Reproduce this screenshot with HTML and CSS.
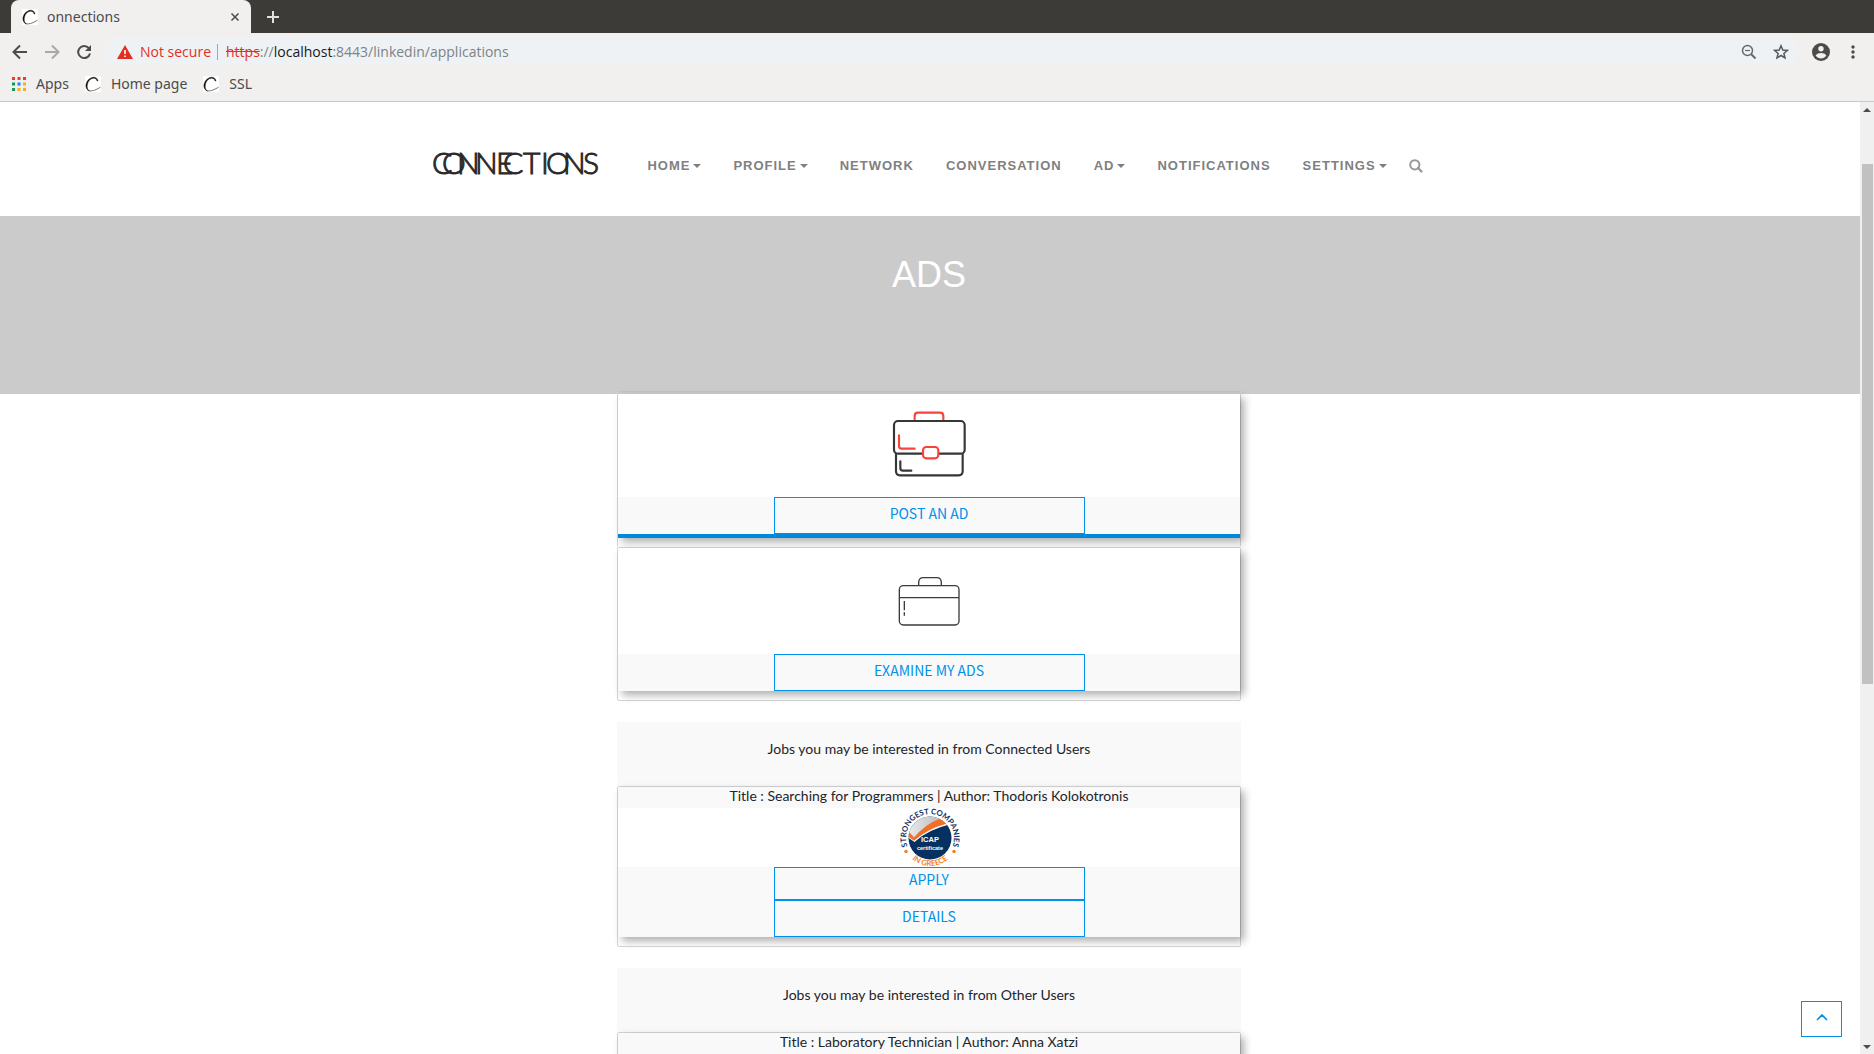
FILE: index.html
```html
<!DOCTYPE html>
<html lang="en">
<head>
<meta charset="utf-8">
<title>Connections</title>
<link rel="stylesheet" href="styles.css">
</head>
<body>
<svg class="defs" aria-hidden="true">
  <symbol id="favicon" viewBox="0 0 16 16">
    <rect width="16" height="16" fill="#fff"/>
    <path d="M3 14.300C5 15.400 8 14.800 10 14C12 13.200 14 12.200 15.500 11.200" fill="none" stroke="#777" stroke-width="1"/>
    <path d="M13 5C12.500 1.600 9.500 .6 6.800 1.600C3 3 .3 7.300 1 11C1.400 13 2.600 14.400 4.500 15C2.200 13.600 1.800 11 2.500 8C3.300 4.800 5.500 2.500 8.500 2.300C10.600 2.300 11.800 3.200 12 5Z" fill="#111" stroke="#111" stroke-width=".4"/>
  </symbol>
</svg>

<header class="browser">
  <div class="tabs">
    <div class="tab">
      <svg class="favicon"><use href="#favicon"/></svg>
      <span class="tab-title">onnections</span>
      <button class="icon-btn" aria-label="Close tab"><svg width="10" height="10" viewBox="0 0 10 10"><path d="M1.500 1.500L8.500 8.500M8.500 1.500L1.500 8.500" stroke="#4a4a4a" stroke-width="1.500"/></svg></button>
    </div>
    <button class="icon-btn new-tab" aria-label="New tab"><svg width="12" height="12" viewBox="0 0 12 12"><path d="M6 0V12M0 6H12" stroke="#e4e0da" stroke-width="2"/></svg></button>
  </div>
  <div class="toolbar">
    <button class="icon-btn" aria-label="Back"><svg width="16" height="16" viewBox="0 0 16 16"><path d="M15 8H2M8 1.500L1.500 8L8 14.500" fill="none" stroke="#4b4b4b" stroke-width="2"/></svg></button>
    <button class="icon-btn" aria-label="Forward"><svg width="16" height="16" viewBox="0 0 16 16"><path d="M1 8H14M8 1.500L14.500 8L8 14.500" fill="none" stroke="#a9a8a6" stroke-width="2"/></svg></button>
    <button class="icon-btn" aria-label="Reload"><svg width="16" height="16" viewBox="0 0 16 16"><path d="M12.800 4.200A6 6 0 1 0 14 9.500" fill="none" stroke="#4b4b4b" stroke-width="2"/><path d="M15 1V7H9Z" fill="#4b4b4b"/></svg></button>
    <div class="omnibox">
      <svg width="16" height="14" viewBox="0 0 16 14"><path d="M8 0L16 14H0Z" fill="#e1301f"/><path d="M8 5V9M8 10.500V12" stroke="#fff" stroke-width="1.600"/></svg>
      <span class="insecure">Not secure</span>
      <span class="url"><s>https</s>://<b>localhost</b>:8443/linkedin/applications</span>
      <button class="icon-btn zoom" aria-label="Zoom"><svg width="16" height="16" viewBox="0 0 16 16"><circle cx="6.500" cy="6.500" r="5" fill="none" stroke="#666a6c" stroke-width="1.500"/><path d="M4 6.500H9" stroke="#666a6c" stroke-width="1.200"/><path d="M10 10L14.500 14.500" stroke="#666a6c" stroke-width="2"/></svg></button>
      <button class="icon-btn" aria-label="Bookmark this page"><svg width="16" height="16" viewBox="0 0 16 16"><path d="M8 1.800L9.800 6L14.400 6.400L10.900 9.400L12 14L8 11.500L4 14L5.100 9.400L1.600 6.400L6.200 6Z" fill="none" stroke="#555a5c" stroke-width="1.500"/></svg></button>
    </div>
    <button class="icon-btn profile" aria-label="Profile"><svg width="18" height="18" viewBox="0 0 18 18"><circle cx="9" cy="9" r="9" fill="#4b4b4b"/><circle cx="9" cy="5.700" r="2.700" fill="#f1f0ee"/><path d="M3.600 12.600C4.500 10.500 7 9.900 9 9.900C11 9.900 13.500 10.500 14.400 12.600C13 14.700 11 15.600 9 15.600C7 15.600 5 14.700 3.600 12.600Z" fill="#f1f0ee"/></svg></button>
    <button class="icon-btn" aria-label="Menu"><svg width="16" height="16" viewBox="0 0 16 16"><g fill="#4b4b4b"><circle cx="8" cy="3" r="1.700"/><circle cx="8" cy="8" r="1.700"/><circle cx="8" cy="13" r="1.700"/></g></svg></button>
  </div>
  <nav class="bookmarks" aria-label="Bookmarks">
    <a href="#"><svg width="14" height="14" viewBox="0 0 14 14"><path d="M0 0h3v3H0zM5.500 0h3v3h-3zM11 0h3v3h-3z" fill="#ee3b2f"/><path d="M0 5.500h3v3H0zM0 11h3v3H0z" fill="#149a56"/><path d="M5.500 5.500h3v3h-3z" fill="#1a82ee"/><path d="M11 5.500h3v3h-3zM5.500 11h3v3h-3zM11 11h3v3h-3z" fill="#f8ae22"/></svg>Apps</a>
    <a href="#"><svg class="favicon"><use href="#favicon"/></svg>Home page</a>
    <a href="#"><svg class="favicon"><use href="#favicon"/></svg>SSL</a>
  </nav>
</header>

<div class="viewport">
  <div class="page">
    <header class="site-header">
      <a class="logo" href="#" aria-label="Connections home">
        <svg width="168" height="40" viewBox="0 0 168 40"><text y="31" x="1 11 26 44 65 72 92 110 115 132 152">CONNECTIONS</text></svg>
      </a>
      <nav class="menu" aria-label="Main">
        <a class="drop" href="#">HOME</a>
        <a class="drop" href="#">PROFILE</a>
        <a href="#">NETWORK</a>
        <a href="#">CONVERSATION</a>
        <a class="drop" href="#">AD</a>
        <a href="#">NOTIFICATIONS</a>
        <a class="drop" href="#">SETTINGS</a>
      </nav>
      <button class="icon-btn search" aria-label="Search"><svg width="14" height="14" viewBox="0 0 14 14"><circle cx="5.800" cy="5.800" r="4.600" fill="none" stroke="#999" stroke-width="2"/><path d="M9 9L12.500 12.500" stroke="#999" stroke-width="2.400" stroke-linecap="round"/></svg></button>
    </header>

    <section class="banner"><h1>ADS</h1></section>

    <main class="ads">
      <section class="card card-first">
        <div class="card-body card-accent">
          <div class="picture picture-post">
            <svg width="76" height="68" viewBox="843 120 228 204" fill="none" stroke="#353737" stroke-width="6.500" stroke-linecap="round">
              <path d="M914 148V138Q914 128 924 128H990Q1000 128 1000 138V148" stroke="#f8423c"/>
              <rect x="852" y="153" width="212" height="98" rx="12"/>
              <path d="M858 252V304Q858 316 870 316H1046Q1058 316 1058 304V252"/>
              <path d="M867 196V228Q867 236 875 236H914" stroke="#f8423c"/>
              <path d="M871 274V294Q871 302 879 302H904"/>
              <rect x="939" y="231" width="46" height="34" rx="10" fill="#fff" stroke="#f8423c"/>
            </svg>
          </div>
          <div class="actions"><a class="action" href="#">POST AN AD</a></div>
        </div>
      </section>

      <section class="card">
        <div class="card-body">
          <div class="picture picture-examine">
            <svg width="64" height="52" viewBox="111 584 192 156" fill="none" stroke="#3a3b3b" stroke-width="4">
              <path d="M176 615V607Q176 592 190 592H230Q244 592 244 607V615"/>
              <rect x="118" y="616" width="179" height="118" rx="12"/>
              <path d="M118 652H297M133 662V690M133 696V706"/>
            </svg>
          </div>
          <div class="actions"><a class="action" href="#">EXAMINE MY ADS</a></div>
        </div>
      </section>

      <h2 class="group-title">Jobs you may be interested in from Connected Users</h2>
      <section class="card">
        <div class="card-body">
          <h3 class="ad-title">Title : Searching for Programmers | Author: Thodoris Kolokotronis</h3>
          <div class="picture">
            <svg class="badge" width="62" height="59" viewBox="0 0 248 236">
              <defs>
                <path id="arc-top" d="M41 161A96 96 0 1 1 215 161"/>
                <path id="arc-bottom" d="M28 170A112 112 0 0 0 228 170"/>
                <clipPath id="disc"><circle cx="128" cy="120" r="86"/></clipPath>
                <linearGradient id="silver"><stop offset="0" stop-color="#eee"/><stop offset="1" stop-color="#a9abb0"/></linearGradient>
              </defs>
              <g clip-path="url(#disc)">
                <rect width="248" height="236" fill="#06305f"/>
                <path d="M30 20H220V50Q120 70 70 118L30 90Z" fill="url(#silver)"/>
                <path d="M44 98L66 116Q110 70 180 56L150 30H230V60Q120 84 66 136L40 118Z" fill="#fff"/>
                <path d="M44 100L64 122Q110 66 170 44L190 62Q120 80 64 128L44 114Z" fill="#f26f26" stroke="#f26f26" stroke-width="5"/>
              </g>
              <text class="badge-top"><textPath href="#arc-top" startOffset="50%">STRONGEST COMPANIES</textPath></text>
              <text class="badge-bottom"><textPath href="#arc-bottom" startOffset="50%">IN GREECE</textPath></text>
              <circle cx="32" cy="174" r="7" fill="#f58220"/><circle cx="224" cy="174" r="7" fill="#f58220"/>
              <text class="badge-name" x="128" y="137">ICAP</text>
              <text class="badge-note" x="128" y="166">certificate</text>
            </svg>
          </div>
          <div class="actions">
            <a class="action action-short" href="#">APPLY</a>
            <a class="action" href="#">DETAILS</a>
          </div>
        </div>
      </section>

      <h2 class="group-title">Jobs you may be interested in from Other Users</h2>
      <section class="card">
        <div class="card-body">
          <h3 class="ad-title">Title : Laboratory Technician | Author: Anna Xatzi</h3>
          <div class="picture"></div>
        </div>
      </section>
    </main>

    <a class="to-top" href="#" aria-label="Back to top"><svg width="12" height="7" viewBox="0 0 12 7"><path d="M1 6L6 1L11 6" fill="none" stroke="#0090e8" stroke-width="1.700"/></svg></a>
  </div>
  <div class="scrollbar" aria-hidden="true">
    <svg width="8" height="4" viewBox="0 0 8 4"><path d="M4 0L8 4H0Z" fill="#4d4d4d"/></svg>
    <div class="track"><div class="thumb"></div></div>
    <svg width="8" height="4" viewBox="0 0 8 4"><path d="M4 4L8 0H0Z" fill="#4d4d4d"/></svg>
  </div>
</div>
</body>
</html>
```
FILE: styles.css
```css
* { box-sizing: border-box; }
body {
  margin: 0;
  height: 100vh;
  display: flex;
  flex-direction: column;
  overflow: hidden;
  background: #fff;
  color: #212529;
  font: 14px/21px Lato, sans-serif;
}
a { color: inherit; text-decoration: none; }
svg { display: block; flex: none; }
h1, h2, h3 { margin: 0; font-weight: 400; }
.defs { position: absolute; width: 0; height: 0; }
.icon-btn { padding: 0; border: 0; background: none; flex: none; }
.favicon { width: 16px; height: 16px; }

/* Browser chrome */
.browser {
  flex: none;
  background: #f1f0ee;
  border-bottom: 1px solid #cac9c7;
  color: #4b4b4b;
  font: 14px/20px "Noto Sans", sans-serif;
}
.tabs {
  display: flex;
  align-items: center;
  height: 33px;
  padding-left: 11px;
  background: #3d3b37;
}
.tab {
  display: flex;
  align-items: center;
  gap: 9px;
  width: 240px;
  height: 33px;
  padding: 0 11px;
  border-radius: 8px 8px 0 0;
  background: #f1f0ee;
}
.tab-title { flex: 1; }
.new-tab { margin-left: 16px; }
.toolbar {
  display: flex;
  align-items: center;
  gap: 16px;
  height: 37px;
  padding: 0 13px 0 12px;
}
.omnibox {
  flex: 1;
  display: flex;
  align-items: center;
  height: 29px;
  margin-left: -4px;
  padding: 0 10px 0 13px;
  border-radius: 15px;
  background: #eef2f4;
  font-family: "Open Sans", sans-serif;
}
.insecure {
  margin: 0 6px 0 7px;
  color: #e1301f;
}
.url {
  flex: 1;
  padding-left: 8px;
  border-left: 1px solid #a5a8aa;
  color: #7d8386;
  line-height: 16px;
}
.url s { color: #e1301f; }
.url b { color: #16191b; font-weight: 400; }
.zoom { margin-right: 16px; }
.profile { margin: 0 -1px 0 -3px; }
.bookmarks {
  display: flex;
  align-items: center;
  gap: 16px;
  height: 31px;
  padding: 0 12px 3px;
}
.bookmarks a { display: flex; align-items: center; gap: 10px; }

/* Page frame */
.viewport { flex: 1; min-height: 0; display: flex; }
.page { position: relative; flex: 1; overflow: hidden; }
.scrollbar {
  display: flex;
  flex-direction: column;
  align-items: center;
  width: 14px;
  padding: 6px 0 5px;
  background: #f0f0f0;
}
.track { flex: 1; width: 11px; padding-top: 52px; }
.thumb { height: 59%; background: #c1c1c1; }

/* Site header */
.site-header {
  display: flex;
  align-items: center;
  justify-content: center;
  height: 114px;
  padding: 14px 6px 0 0;
}
.logo { margin: 0 48px 6px 0; }
.logo text {
  font: 300 30px Lato, sans-serif;
  fill: #2c2829;
  stroke: #2c2829;
  stroke-width: 1px;
}
.menu {
  display: flex;
  gap: 32px;
  color: #808080;
  font: bold 13px/20px "Liberation Sans", sans-serif;
  letter-spacing: 1px;
}
.drop { display: flex; align-items: center; gap: 3px; }
.drop::after {
  content: "";
  border: 4px solid transparent;
  border-top-color: currentColor;
  border-bottom: 0;
}
.search { margin-left: 22px; }

.banner {
  height: 178px;
  padding: 37px 2px 0 0;
  background: #cbcbcb;
  color: #fff;
  text-align: center;
}
.banner h1 { font: 36px/44px "Liberation Sans", sans-serif; }

/* Ads column */
.ads {
  position: relative;
  max-width: 626px;
  margin: -3px auto 0;
  padding-right: 2px;
  text-align: center;
}
.card {
  margin-bottom: 21px;
  padding-bottom: 9px;
  border: 1px solid #d5d5d5;
  border-radius: 2px;
  overflow: clip;
  overflow-clip-margin: 12px;
}
.card-first {
  margin-bottom: 0;
  padding-top: 2px;
  border-top-color: #c3c3c3;
  border-bottom: 0;
}
.card-body {
  background: #f9f9f9;
  box-shadow: 4px 4px 8px 0 rgba(0, 0, 0, .32);
}
.card-accent { border-bottom: 4px solid #0089dc; }
.picture {
  display: flex;
  justify-content: center;
  min-height: 59px;
  background: #fff;
}
.picture-post { height: 103px; padding-top: 16px; }
.picture-examine { height: 106px; padding-top: 27px; }
.actions { display: flex; flex-direction: column; align-items: center; }
.action {
  width: 50%;
  height: 37px;
  padding-top: 4px;
  border: 1px solid #0091ea;
  color: #0091ea;
  font: 14px/22px "Noto Sans CJK SC", sans-serif;
}
.action-short { height: 33px; padding-top: 0; }
.group-title {
  height: 64px;
  padding-top: 16px;
  background: #f9f9f9;
  font: inherit;
}
.ad-title {
  height: 21px;
  font-size: 14px;
  line-height: 18px;
}

.badge text { font-family: Lato, sans-serif; font-weight: 700; text-anchor: middle; }
.badge-top { font-size: 31px; fill: #14305c; }
.badge-bottom { font-size: 31px; fill: #f58220; }
.badge .badge-name { font-family: "Liberation Sans", sans-serif; font-size: 30px; fill: #fff; }
.badge .badge-note { font-family: "Liberation Sans", sans-serif; font-size: 22px; fill: #fff; }

.to-top {
  position: absolute;
  right: 18px;
  bottom: 17px;
  display: flex;
  justify-content: center;
  width: 41px;
  height: 36px;
  padding-top: 12px;
  border: 1px solid #0091ea;
  background: #fff;
}
```
